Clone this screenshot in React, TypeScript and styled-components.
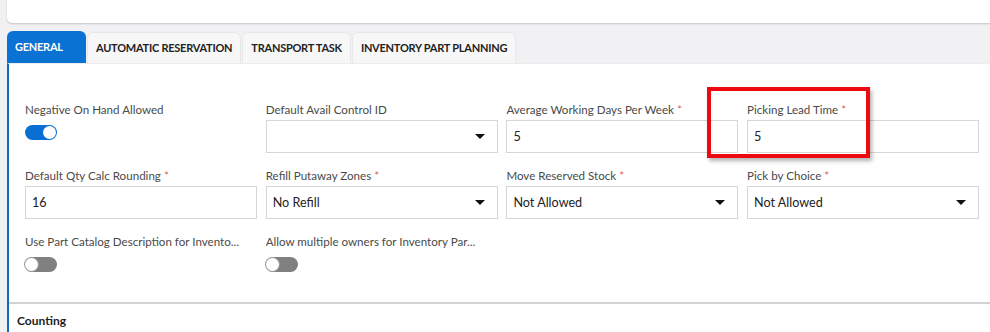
import React from "react";
import styled, { createGlobalStyle } from "styled-components";

const Global = createGlobalStyle`
  html, body { margin: 0; padding: 0; }
  body {
    background: #f1f0f3;
    font-family: Lato, "Open Sans", sans-serif;
    width: 990px;
    height: 332px;
    overflow: hidden;
  }
`;

const Page = styled.div`
  padding-left: 7px;
  width: 1000px;
`;

const HeaderCard = styled.div`
  height: 23px;
  background: #ffffff;
  border-bottom-left-radius: 5px;
  box-shadow: 0 1px 2px rgba(0, 0, 0, 0.18);
`;

const TabBar = styled.div`
  display: flex;
  margin-top: 8px;
  height: 32px;
  align-items: flex-end;
`;

const Tab = styled.div<{ $active?: boolean; $width?: number }>`
  box-sizing: border-box;
  height: ${(p) => (p.$active ? 32 : 31)}px;
  ${(p) => (p.$width ? `width: ${p.$width}px;` : "")}
  padding: 0 8px 1px;
  display: flex;
  align-items: center;
  font-size: 11px;
  font-weight: 700;
  letter-spacing: -0.25px;
  white-space: nowrap;
  color: ${(p) => (p.$active ? "#ffffff" : "#222222")};
  background: ${(p) => (p.$active ? "#0a72d2" : "#f7f7f8")};
  border-radius: 6px 6px 0 0;
  border: ${(p) => (p.$active ? "none" : "1px solid #e8e8ea")};
  border-bottom: none;
  margin-right: 1px;
`;

const Panel = styled.div`
  position: relative;
  background: #ffffff;
  border-left: 2px solid #0d6cbf;
  border-top: 1px solid #ececec;
`;

const Form = styled.div`
  display: grid;
  grid-template-columns: repeat(4, 232px);
  column-gap: 8.7px;
  row-gap: 15px;
  padding: 38px 0 30px 16px;
`;

const Field = styled.div`
  display: flex;
  flex-direction: column;
`;

const Label = styled.div`
  font-size: 11.6px;
  line-height: 16px;
  color: #4a4a4a;
  white-space: nowrap;
  overflow: hidden;
  text-overflow: ellipsis;
  margin-bottom: 2px;
`;

const Req = styled.span`
  color: #e06060;
  margin-left: 3px;
`;

const Input = styled.div`
  box-sizing: border-box;
  height: 33px;
  border: 1px solid #d6d6d6;
  background: #fff;
  display: flex;
  align-items: center;
  justify-content: space-between;
  padding: 0 12px 0 6px;
  font-size: 12.6px;
  color: #222;
`;

const Caret = styled.span`
  width: 0;
  height: 0;
  border-left: 5px solid transparent;
  border-right: 5px solid transparent;
  border-top: 5px solid #111;
`;

const Toggle = styled.div<{ $on?: boolean }>`
  box-sizing: border-box;
  margin-top: 5px;
  width: 32px;
  height: 15px;
  border-radius: 8px;
  background: ${(p) => (p.$on ? "#0a6fd3" : "#808080")};
  position: relative;
  &::after {
    content: "";
    position: absolute;
    top: 1px;
    ${(p) => (p.$on ? "right: 1px;" : "left: 0px;")}
    width: 13px;
    height: 13px;
    border-radius: 50%;
    background: #fff;
    box-shadow: ${(p) => (p.$on ? "none" : "0 0 0 1px #9a9a9a")};
  }
`;

const Highlight = styled.div`
  position: absolute;
  left: 698px;
  top: 23px;
  width: 163px;
  height: 71px;
  box-sizing: border-box;
  border: 4px solid #ec0a0f;
  box-shadow: 2px 3px 4px rgba(0, 0, 0, 0.3);
  pointer-events: none;
`;

const Section = styled.div`
  border-top: 2px solid #d2d2d2;
  padding: 9px 0 0 8px;
  height: 30px;
  box-sizing: border-box;
  font-size: 12px;
  font-weight: 700;
  color: #222;
`;

type F =
  | { kind: "toggle"; label: string; on: boolean; req?: boolean }
  | { kind: "input"; label: string; value: string; req?: boolean }
  | { kind: "select"; label: string; value: string; req?: boolean };

const fields: F[] = [
  { kind: "toggle", label: "Negative On Hand Allowed", on: true },
  { kind: "select", label: "Default Avail Control ID", value: "" },
  { kind: "input", label: "Average Working Days Per Week", value: "5", req: true },
  { kind: "input", label: "Picking Lead Time", value: "5", req: true },
  { kind: "input", label: "Default Qty Calc Rounding", value: "16", req: true },
  { kind: "select", label: "Refill Putaway Zones", value: "No Refill", req: true },
  { kind: "select", label: "Move Reserved Stock", value: "Not Allowed", req: true },
  { kind: "select", label: "Pick by Choice", value: "Not Allowed", req: true },
  { kind: "toggle", label: "Use Part Catalog Description for Invento...", on: false },
  { kind: "toggle", label: "Allow multiple owners for Inventory Par...", on: false },
];

export default function App() {
  return (
    <Page>
      <Global />
      <HeaderCard />
      <TabBar>
        <Tab $active $width={79}>GENERAL</Tab>
        <Tab>AUTOMATIC RESERVATION</Tab>
        <Tab>TRANSPORT TASK</Tab>
        <Tab>INVENTORY PART PLANNING</Tab>
      </TabBar>
      <Panel>
        <Form>
          {fields.map((f, i) => (
            <Field key={i}>
              <Label>
                {f.label}
                {f.req && <Req>*</Req>}
              </Label>
              {f.kind === "toggle" ? (
                <Toggle $on={f.on} />
              ) : (
                <Input>
                  <span>{f.value}</span>
                  {f.kind === "select" && <Caret />}
                </Input>
              )}
            </Field>
          ))}
        </Form>
        <Highlight />
        <Section>Counting</Section>
      </Panel>
    </Page>
  );
}
